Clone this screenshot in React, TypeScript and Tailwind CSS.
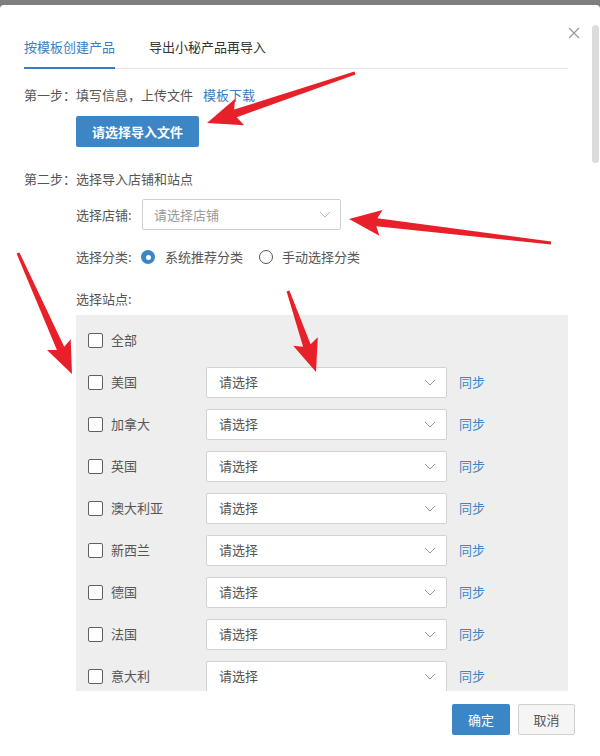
import React from "react";

type P = [number, number];

function arrowPoints(tail: P, tip: P, headLen: number, headW: number, tailW: number, neckW: number) {
  const dx = tip[0] - tail[0];
  const dy = tip[1] - tail[1];
  const len = Math.hypot(dx, dy);
  const ux = dx / len;
  const uy = dy / len;
  const nx = -uy;
  const ny = ux;
  const neck: P = [tip[0] - ux * headLen, tip[1] - uy * headLen];
  const wingBase: P = [tip[0] - ux * headLen * 1.15, tip[1] - uy * headLen * 1.15];
  const pts: P[] = [
    [tail[0] + (nx * tailW) / 2, tail[1] + (ny * tailW) / 2],
    [neck[0] + (nx * neckW) / 2, neck[1] + (ny * neckW) / 2],
    [wingBase[0] + nx * headW, wingBase[1] + ny * headW],
    tip,
    [wingBase[0] - nx * headW, wingBase[1] - ny * headW],
    [neck[0] - (nx * neckW) / 2, neck[1] - (ny * neckW) / 2],
    [tail[0] - (nx * tailW) / 2, tail[1] - (ny * tailW) / 2],
  ];
  return pts.map((p) => `${p[0].toFixed(1)},${p[1].toFixed(1)}`).join(" ");
}

function Chevron({ color = "#9a9a9a" }: { color?: string }) {
  return (
    <svg width="12" height="7" viewBox="0 0 12 7" className="shrink-0">
      <polyline points="1,1 6,6 11,1" fill="none" stroke={color} strokeWidth="1" />
    </svg>
  );
}

function Checkbox() {
  return <span className="w-[15px] h-[15px] border border-[#606060] rounded-[2px] bg-white shrink-0" />;
}

const sites = ["美国", "加拿大", "英国", "澳大利亚", "新西兰", "德国", "法国", "意大利"];

export default function App() {
  const font = { fontFamily: '"Noto Sans CJK SC", "Noto Sans", sans-serif' };
  return (
    <div className="relative w-[600px] h-[756px] overflow-hidden bg-[#7f7f7f] pt-[5px]" style={font}>
      <div className="relative h-[751px] bg-white rounded-t-[4px] flex flex-col text-[13px] text-[#555]">
        {/* close */}
        <svg className="absolute left-[568px] top-[22px]" width="12" height="12" viewBox="0 0 12 12">
          <path d="M1 1 L11 11 M11 1 L1 11" stroke="#999" strokeWidth="1.2" />
        </svg>
        {/* scrollbar thumb */}
        <div className="absolute left-[592px] top-[20px] w-[7px] h-[138px] rounded-full bg-[#dcdcdc]" />

        <div className="flex-1 overflow-hidden pl-[24px] pr-[32px]">
          {/* tabs */}
          <div className="mt-[32px] flex border-b border-[#e6e6e6]">
            <div className="pb-[10px] leading-[20px] text-[#3a7dc0] border-b-2 border-[#3a7dc0] -mb-px">按模板创建产品</div>
            <div className="ml-[34px] pb-[10px] leading-[20px] text-[#333]">导出小秘产品再导入</div>
          </div>

          <div className="mt-[16px] leading-[20px] flex">
            <span>第一步：填写信息，上传文件</span>
            <span className="ml-[10px] text-[#3a7dc0]">模板下载</span>
          </div>

          <div className="mt-[11px] ml-[52px]">
            <div className="inline-flex items-center justify-center w-[123px] h-[31px] rounded-[2px] bg-[#3d86c6] text-white font-bold">
              请选择导入文件
            </div>
          </div>

          <div className="mt-[22px] leading-[20px]">第二步：选择导入店铺和站点</div>

          <div className="mt-[10px] ml-[52px] flex items-center">
            <span className="w-[66px]">选择店铺:</span>
            <div className="w-[199px] h-[31px] border border-[#cfcfcf] rounded-[2px] flex items-center justify-between pl-[11px] pr-[9px]">
              <span className="text-[#999]">请选择店铺</span>
              <Chevron color="#b5b5b5" />
            </div>
          </div>

          <div className="mt-[17px] ml-[52px] flex items-center leading-[20px]">
            <span className="w-[65px]">选择分类:</span>
            <span className="w-[14px] h-[14px] rounded-full bg-[#3d86c6] flex items-center justify-center shrink-0">
              <span className="w-[5px] h-[5px] rounded-full bg-white" />
            </span>
            <span className="ml-[10px]">系统推荐分类</span>
            <span className="ml-[16px] w-[14px] h-[14px] rounded-full border border-[#555] bg-white shrink-0" />
            <span className="ml-[9px]">手动选择分类</span>
          </div>

          <div className="mt-[22px] ml-[52px] leading-[20px]">选择站点:</div>

          <div className="mt-[6px] ml-[52px] bg-[#eeeeee] pt-[9px] pl-[12px] pb-[10px] flex flex-col gap-[10px]">
            <div className="h-[32px] flex items-center">
              <Checkbox />
              <span className="ml-[8px]">全部</span>
            </div>
            {sites.map((s) => (
              <div key={s} className="h-[32px] flex items-center">
                <div className="w-[118px] flex items-center">
                  <Checkbox />
                  <span className="ml-[8px]">{s}</span>
                </div>
                <div className="w-[241px] h-[31px] bg-white border border-[#d2d2d2] rounded-[2px] flex items-center justify-between pl-[12px] pr-[10px]">
                  <span className="text-[#555]">请选择</span>
                  <Chevron />
                </div>
                <span className="ml-[12px] text-[#3f84c4]">同步</span>
              </div>
            ))}
          </div>
        </div>

        <div className="h-[65px] shrink-0 flex justify-end items-start pt-[13px] pr-[25px] gap-[8px]">
          <div className="w-[58px] h-[31px] rounded-[2px] bg-[#3d86c6] text-white flex items-center justify-center">确定</div>
          <div className="w-[57px] h-[31px] rounded-[2px] bg-[#f5f5f5] border border-[#cfcfcf] text-[#555] flex items-center justify-center">取消</div>
        </div>
      </div>

      {/* red arrows overlay */}
      <svg className="absolute left-0 top-0 pointer-events-none" width="600" height="756">
        <polygon fill="#e8202a" points={arrowPoints([355, 73], [207, 123], 30, 14, 3, 8)} />
        <polygon fill="#e8202a" points={arrowPoints([551, 243], [349, 219], 28, 13, 3, 8)} />
        <polygon fill="#e8202a" points={arrowPoints([18, 253], [72, 374], 28, 13, 3, 8)} />
        <polygon fill="#e8202a" points={arrowPoints([288, 291], [316, 372], 28, 13, 3, 8)} />
      </svg>
    </div>
  );
}
